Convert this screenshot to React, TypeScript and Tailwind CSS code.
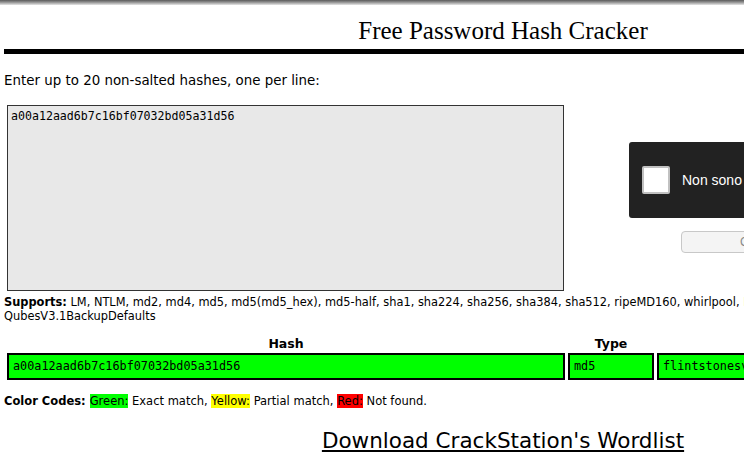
import React from "react";

const verdana = { fontFamily: '"DejaVu Sans", Verdana, sans-serif' };
const mono = { fontFamily: '"DejaVu Sans Mono", monospace' };

export default function App() {
  return (
    <div className="w-[744px] h-[462px] overflow-hidden bg-white text-black" style={verdana}>
      <div className="h-[5px] bg-gradient-to-b from-[#5a5a5a] via-[#9a9a9a] to-[#e6e6e6]" />
      <div className="w-[1010px]">
        <h1 className="h-[44px] pt-[12px] text-center text-[25px] leading-[28px] font-normal pr-[4px]" style={{ fontFamily: '"Liberation Serif", "Times New Roman", serif' }}>
          Free Password Hash Cracker
        </h1>
        <div className="ml-[4px] h-[5px] bg-black" />
        <p className="mt-[19px] ml-[4px] text-[13.4px] leading-[16px]">Enter up to 20 non-salted hashes, one per line:</p>

        <div className="mt-[16px] flex">
          <div className="ml-[7px] w-[557px] h-[186px] bg-[#e8e8e8] border border-[#333] px-[3px] py-[3px] text-[11.6px] leading-[14px]" style={mono}>
            a00a12aad6b7c16bf07032bd05a31d56
          </div>
          <div className="ml-[65px] flex flex-col">
            <div className="mt-[37px] w-[300px] h-[76px] rounded-[3px] bg-[#222] flex items-center pl-[13px]">
              <div className="w-[28px] h-[28px] bg-white rounded-[2px] border-[2px] border-[#c1c1c1]" />
              <span className="ml-[12px] text-white text-[14px]" style={{ fontFamily: '"Liberation Sans", Arial, sans-serif' }}>Non sono un robot</span>
            </div>
            <div className="mt-[13px] ml-[52px] w-[120px] h-[22px] rounded-[4px] border border-[#c8c8c8] bg-[#f4f4f4] text-[12px] pl-[58px] leading-[20px] text-[#888]" style={{ fontFamily: '"Liberation Sans", Arial, sans-serif' }}>
              Crack
            </div>
          </div>
        </div>

        <div className="mt-[4px] ml-[4px] text-[11.4px] leading-[14px]">
          <div className="whitespace-nowrap">
            <b>Supports:</b> LM, NTLM, md2, md4, md5, md5(md5_hex), md5-half, sha1, sha224, sha256, sha384, sha512, ripeMD160, whirlpool, MySQL 4.1+ (sha1(sha1_bin)),
          </div>
          <div>QubesV3.1BackupDefaults</div>
        </div>

        <div className="mt-[14px] ml-[7px] flex gap-[3px] text-[12.5px] leading-[14px] font-bold">
          <div className="w-[558px] text-center">Hash</div>
          <div className="w-[86px] text-center">Type</div>
          <div className="w-[300px] text-center">Result</div>
        </div>
        <div className="mt-[2px] ml-[7px] flex gap-[3px] text-[11.8px]" style={mono}>
          <div className="w-[558px] h-[27px] bg-[#00ff00] border-[2px] border-black pl-[4px] leading-[23px]">a00a12aad6b7c16bf07032bd05a31d56</div>
          <div className="w-[86px] h-[27px] bg-[#00ff00] border-[2px] border-black pl-[4px] leading-[23px]">md5</div>
          <div className="w-[300px] h-[27px] bg-[#00ff00] border-[2px] border-black pl-[4px] leading-[23px]">flintstonesvitamins</div>
        </div>

        <p className="mt-[14px] ml-[4px] text-[11.5px] leading-[14px]">
          <b>Color Codes: </b>
          <span className="bg-[#00ff00]">Green:</span> Exact match, <span className="bg-[#ffff00]">Yellow:</span> Partial match, <span className="bg-[#ff0000]">Red:</span> Not found.
        </p>

        <div className="mt-[20px] text-center text-[21.5px] leading-[26px] pr-[4px]">
          <a className="underline">Download CrackStation's Wordlist</a>
        </div>
      </div>
    </div>
  );
}
